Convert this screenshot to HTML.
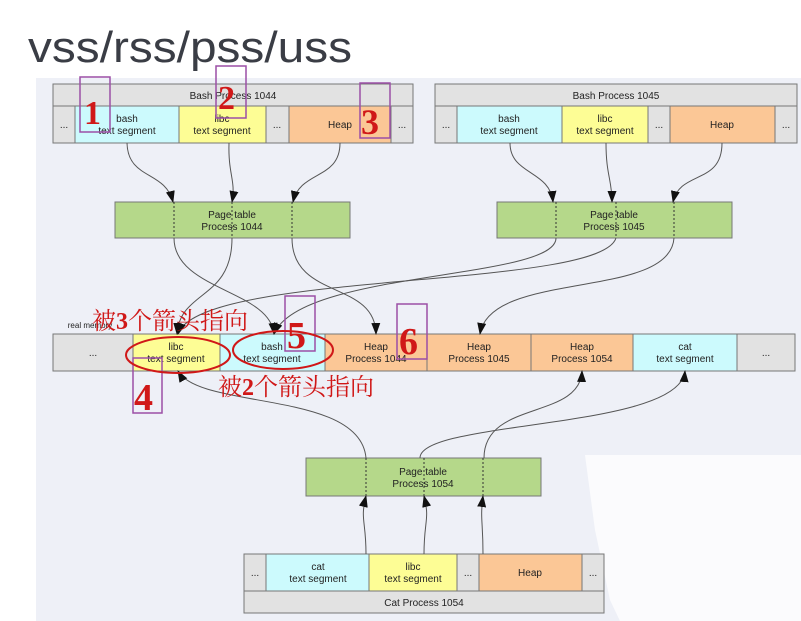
<!DOCTYPE html>
<html><head><meta charset="utf-8"><style>
html,body{margin:0;padding:0;background:#fff;width:801px;height:621px;overflow:hidden}
svg{display:block}
.t{font-family:"Liberation Sans",Arial,sans-serif;font-size:10px;fill:#222;text-anchor:middle}
.r{font-family:"Liberation Serif","Noto Serif CJK SC",serif;fill:#d01818;font-weight:bold}
.c{font-family:"Liberation Serif","Noto Serif CJK SC",serif;fill:#d01818;font-size:24px}
</style></head><body>
<svg width="801" height="621" xmlns="http://www.w3.org/2000/svg">
<defs><marker id="a" markerWidth="12" markerHeight="9" refX="11" refY="4.5" orient="auto" markerUnits="userSpaceOnUse"><path d="M0,0 L12,4.5 L0,9 Z" fill="#111"/></marker></defs>
<rect x="36" y="78" width="765" height="543" fill="#eef0f7"/>
<path d="M585 455 H801 V621 H620 L610 600 L595 530 Z" fill="#fbfbfd"/>
<text x="28" y="62" font-family="'Liberation Sans',sans-serif" font-size="44" fill="#3a3d45" textLength="324" lengthAdjust="spacingAndGlyphs">vss/rss/pss/uss</text>
<g stroke="#777" stroke-width="1">
<rect x="53" y="84" width="360" height="22" fill="#e2e2e2"/>
<rect x="53" y="106" width="22" height="37" fill="#e2e2e2"/>
<rect x="75" y="106" width="104" height="37" fill="#ccfafd"/>
<rect x="179" y="106" width="87" height="37" fill="#fdfd95"/>
<rect x="266" y="106" width="23" height="37" fill="#e2e2e2"/>
<rect x="289" y="106" width="102" height="37" fill="#fbc796"/>
<rect x="391" y="106" width="22" height="37" fill="#e2e2e2"/>
<rect x="435" y="84" width="362" height="22" fill="#e2e2e2"/>
<rect x="435" y="106" width="22" height="37" fill="#e2e2e2"/>
<rect x="457" y="106" width="105" height="37" fill="#ccfafd"/>
<rect x="562" y="106" width="86" height="37" fill="#fdfd95"/>
<rect x="648" y="106" width="22" height="37" fill="#e2e2e2"/>
<rect x="670" y="106" width="105" height="37" fill="#fbc796"/>
<rect x="775" y="106" width="22" height="37" fill="#e2e2e2"/>
<rect x="115" y="202" width="235" height="36" fill="#b5d88a"/>
<rect x="497" y="202" width="235" height="36" fill="#b5d88a"/>
<rect x="306" y="458" width="235" height="38" fill="#b5d88a"/>
<rect x="53" y="334" width="80" height="37" fill="#e2e2e2"/>
<rect x="133" y="334" width="87" height="37" fill="#fdfd95"/>
<rect x="220" y="334" width="105" height="37" fill="#ccfafd"/>
<rect x="325" y="334" width="102" height="37" fill="#fbc796"/>
<rect x="427" y="334" width="104" height="37" fill="#fbc796"/>
<rect x="531" y="334" width="102" height="37" fill="#fbc796"/>
<rect x="633" y="334" width="104" height="37" fill="#ccfafd"/>
<rect x="737" y="334" width="58" height="37" fill="#e2e2e2"/>
<rect x="244" y="554" width="22" height="37" fill="#e2e2e2"/>
<rect x="266" y="554" width="103" height="37" fill="#ccfafd"/>
<rect x="369" y="554" width="88" height="37" fill="#fdfd95"/>
<rect x="457" y="554" width="22" height="37" fill="#e2e2e2"/>
<rect x="479" y="554" width="103" height="37" fill="#fbc796"/>
<rect x="582" y="554" width="22" height="37" fill="#e2e2e2"/>
<rect x="244" y="591" width="360" height="22" fill="#e2e2e2"/>
</g>
<g class="t">
<text x="233" y="99">Bash Process 1044</text>
<text x="616" y="99">Bash Process 1045</text>
<text x="64" y="128">...</text><text x="277" y="128">...</text><text x="402" y="128">...</text>
<text x="127" y="122">bash</text><text x="127" y="134">text segment</text>
<text x="222" y="122">libc</text><text x="222" y="134">text segment</text>
<text x="340" y="128">Heap</text>
<text x="446" y="128">...</text><text x="659" y="128">...</text><text x="786" y="128">...</text>
<text x="509" y="122">bash</text><text x="509" y="134">text segment</text>
<text x="605" y="122">libc</text><text x="605" y="134">text segment</text>
<text x="722" y="128">Heap</text>
<text x="232" y="218">Page table</text><text x="232" y="230">Process 1044</text>
<text x="614" y="218">Page table</text><text x="614" y="230">Process 1045</text>
<text x="423" y="475">Page table</text><text x="423" y="487">Process 1054</text>
<text x="93" y="356">...</text>
<text x="176" y="350">libc</text><text x="176" y="362">text segment</text>
<text x="272" y="350">bash</text><text x="272" y="362">text segment</text>
<text x="376" y="350">Heap</text><text x="376" y="362">Process 1044</text>
<text x="479" y="350">Heap</text><text x="479" y="362">Process 1045</text>
<text x="582" y="350">Heap</text><text x="582" y="362">Process 1054</text>
<text x="685" y="350">cat</text><text x="685" y="362">text segment</text>
<text x="766" y="356">...</text>
<text x="255" y="576">...</text><text x="468" y="576">...</text><text x="593" y="576">...</text>
<text x="318" y="570">cat</text><text x="318" y="582">text segment</text>
<text x="413" y="570">libc</text><text x="413" y="582">text segment</text>
<text x="530" y="576">Heap</text>
<text x="424" y="606">Cat Process 1054</text>
<text x="90" y="328" style="font-size:8px">real memory</text>
</g>
<g fill="none" stroke="#555" stroke-width="1" marker-end="url(#a)">
<path d="M127 143 C128 180 165 170 173 202"/>
<path d="M229 143 C228 175 236 180 232 202"/>
<path d="M340 143 C340 180 300 170 293 202"/>
<path d="M510 143 C510 175 550 170 553 202"/>
<path d="M606 143 C606 175 612 180 612 202"/>
<path d="M722 143 C722 185 680 170 673 202"/>
<path d="M174 238 C174 290 270 290 274 334"/>
<path d="M232 238 C232 300 180 290 177 334"/>
<path d="M292 238 C292 300 375 280 376 334"/>
<path d="M556 238 C556 280 300 270 274 334"/>
<path d="M616 238 C600 290 200 270 178 334"/>
<path d="M674 238 C670 300 490 270 480 334"/>
<path d="M366 458 C360 390 200 410 178 371"/>
<path d="M484 458 C484 400 580 420 582 371"/>
<path d="M420 458 C420 420 680 430 685 371"/>
<path d="M366 554 C366 520 360 520 366 496"/>
<path d="M424 554 C424 520 430 520 424 496"/>
<path d="M483 554 C483 520 480 520 483 496"/>
</g>
<g stroke="#333" stroke-dasharray="2,2" stroke-width="1">
<line x1="174" y1="202" x2="174" y2="238"/><line x1="232" y1="202" x2="232" y2="238"/><line x1="292" y1="202" x2="292" y2="238"/>
<line x1="556" y1="202" x2="556" y2="238"/><line x1="616" y1="202" x2="616" y2="238"/><line x1="674" y1="202" x2="674" y2="238"/>
<line x1="366" y1="458" x2="366" y2="496"/><line x1="424" y1="458" x2="424" y2="496"/><line x1="483" y1="458" x2="483" y2="496"/>
</g>
<g fill="none" stroke="#9b4fa6" stroke-width="1.5">
<rect x="80" y="77" width="30" height="55"/>
<rect x="216" y="66" width="30" height="52"/>
<rect x="360" y="83" width="30" height="55"/>
<rect x="285" y="296" width="30" height="55"/>
<rect x="397" y="304" width="30" height="55"/>
<rect x="133" y="358" width="29" height="55"/>
</g>
<g fill="none" stroke="#d01818" stroke-width="2">
<ellipse cx="178" cy="355" rx="52" ry="18"/>
<ellipse cx="283" cy="350" rx="50" ry="19"/>
</g>
<g class="r">
<text x="84" y="124" font-size="34">1</text>
<text x="218" y="109" font-size="34">2</text>
<text x="361" y="134" font-size="36">3</text>
<text x="134" y="410" font-size="38">4</text>
<text x="287" y="348" font-size="38">5</text>
<text x="399" y="354" font-size="38">6</text>
</g>
<text class="c" x="92" y="329">被<tspan font-weight="bold">3</tspan>个箭头指向</text>
<text class="c" x="218" y="395">被<tspan font-weight="bold">2</tspan>个箭头指向</text>
</svg>
</body></html>
